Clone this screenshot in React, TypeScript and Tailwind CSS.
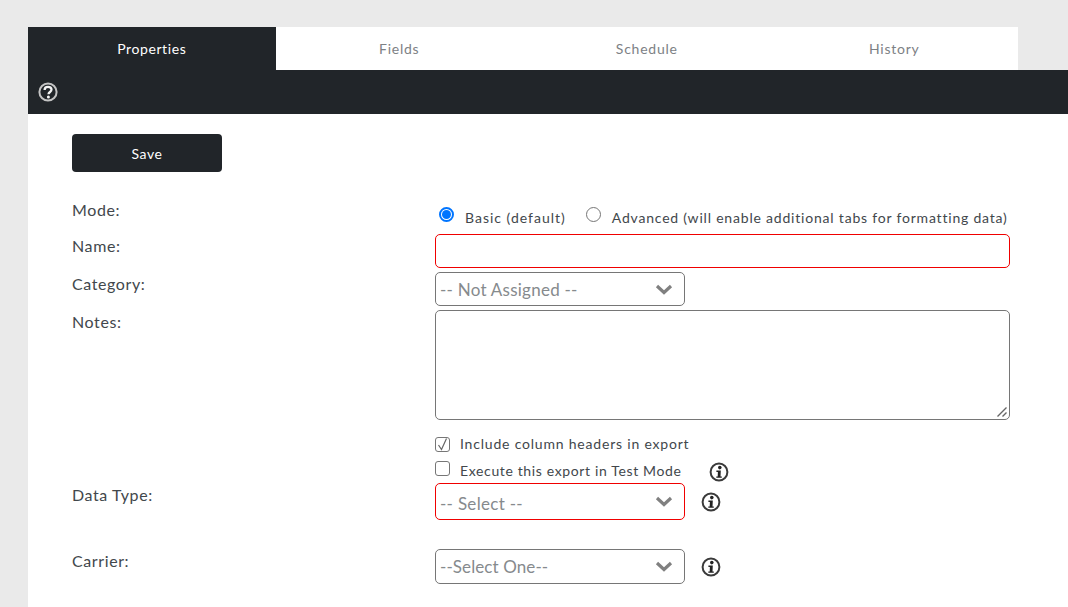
const labelText = "text-[16px] leading-[20px] text-[#42474c] tracking-[0.6px]"
const optionText = "text-[14px] leading-[18px] text-[#42474c]"

const tabs = ["Properties", "Fields", "Schedule", "History"]

const InfoIcon = () => (
  <svg width="20" height="20" viewBox="0 0 20 20" className="block">
    <circle cx="10" cy="10" r="8.4" fill="#fff" stroke="#3a3a3a" strokeWidth="2" />
    <circle cx="10.8" cy="5.6" r="1.8" fill="#222" />
    <path d="M7.4 8.6h4.4l-.3 5.8h1.3v1.4H7.3v-1.4h1.4l.2-4.4H7.4z" fill="#222" />
  </svg>
)

const HelpIcon = () => (
  <svg width="20" height="20" viewBox="0 0 20 20" className="block">
    <circle cx="10" cy="10" r="8.6" fill="none" stroke="#c4c4c4" strokeWidth="2" />
    <path d="M6.6 8C6.6 5.8 8.2 4.8 10 4.8c2 0 3.5 1.1 3.5 2.8 0 2.4-3 2.3-3 4.6" fill="none" stroke="#f4f4f4" strokeWidth="2.3" />
    <circle cx="10.4" cy="15.1" r="1.5" fill="#f4f4f4" />
  </svg>
)

const Select = ({ text, invalid, height, textClass }: { text: string; invalid?: boolean; height: string; textClass: string }) => (
  <div
    className={`flex w-[250px] items-center justify-between rounded-[5px] border bg-white pl-[4px] pr-[11px] ${height} ${
      invalid ? "border-[#f00000]" : "border-[#767676]"
    }`}
  >
    <span className={`font-['Lato',sans-serif] text-[17px] leading-[22px] text-[#868a8d] ${textClass}`}>{text}</span>
    <svg width="18" height="11" viewBox="0 0 18 11" className="block">
      <path d="M2 2l7 6.5L16 2" fill="none" stroke="#808080" strokeWidth="3.2" />
    </svg>
  </div>
)

const Row = ({ label, labelClass, className, children }: { label?: string; labelClass?: string; className?: string; children: React.ReactNode }) => (
  <div className={`grid grid-cols-[363px_575px] ${className ?? ""}`}>
    <div className={`${labelText} ${labelClass ?? ""}`}>{label}</div>
    <div>{children}</div>
  </div>
)

export default function App() {
  return (
    <div className="h-[607px] overflow-hidden bg-[#eaeaea] pl-[28px] pt-[27px] font-['Lato',sans-serif]">
      <div className="flex h-[43px] w-[990px] bg-white">
        {tabs.map((tab, i) => (
          <div
            key={tab}
            className={`flex flex-1 items-center justify-center text-[14px] ${
              i === 0 ? "bg-[#212529] tracking-[0.6px] text-white" : "tracking-[0.75px] text-[#7d8185]"
            }`}
          >
            {tab}
          </div>
        ))}
      </div>
      <div className="flex h-[44px] items-center bg-[#212529] pl-[10px]">
        <HelpIcon />
      </div>
      <div className="h-[493px] bg-white pl-[44px] pt-[20px]">
        <button className="block h-[38px] w-[150px] rounded-[4px] bg-[#212529] text-[14px] tracking-[0.6px] text-white">
          Save
        </button>

        <Row label="Mode:" className="mt-[28px] h-[34px]">
          <div className="flex items-start pl-[4px] pt-[9px]">
            <span className="mr-[11px] mt-[-2px] flex h-[15px] w-[15px] items-center justify-center rounded-full border-[2px] border-[#0075ff]">
              <span className="h-[9px] w-[9px] rounded-full bg-[#0075ff]" />
            </span>
            <span className={`${optionText} mr-[20px] tracking-[1px]`}>Basic (default)</span>
            <span className="mr-[11px] mt-[-2px] h-[15px] w-[15px] rounded-full border border-[#767676]" />
            <span className={`${optionText} tracking-[0.8px]`}>Advanced (will enable additional tabs for formatting data)</span>
          </div>
        </Row>

        <Row label="Name:" labelClass="pt-[2px]" className="h-[34px]">
          <div className="h-[34px] rounded-[5px] border border-[#f00000]" />
        </Row>

        <Row label="Category:" labelClass="pt-[2px]" className="mt-[4px] h-[34px]">
          <Select text="-- Not Assigned --" height="h-[34px]" textClass="pt-[2px] tracking-[0.25px]" />
        </Row>

        <Row label="Notes:" labelClass="pt-[2px]" className="mt-[4px] h-[110px]">
          <div className="relative h-[110px] rounded-[5px] border border-[#767676]">
            <svg width="12" height="12" viewBox="0 0 12 12" className="absolute bottom-[1px] right-[1px]">
              <path d="M1.5 10.5L10.5 1.5M6.5 10.5L10.5 6.5" stroke="#666" strokeWidth="1.4" />
            </svg>
          </div>
        </Row>

        <Row className="mt-[15px] h-[19px]">
          <div className="flex items-center">
            <span className="relative mr-[10px] h-[15px] w-[15px] rounded-[3px] border border-[#767676]">
              <svg width="15" height="15" viewBox="0 0 15 15" className="absolute left-[-1px] top-[-1px]">
                <path d="M3.5 8l3 4.5L11.5 1.5" fill="none" stroke="#666" strokeWidth="1.2" />
              </svg>
            </span>
            <span className={`${optionText} tracking-[0.8px]`}>Include column headers in export</span>
          </div>
        </Row>

        <Row className="mt-[8px] h-[20px]">
          <div className="flex h-[20px] items-center">
            <span className="mr-[10px] mt-[-7px] h-[15px] w-[15px] rounded-[3px] border border-[#767676]" />
            <span className={`${optionText} mt-[-3px] w-[250px] tracking-[0.64px]`}>Execute this export in Test Mode</span>
            <span className="ml-[-1px]">
              <InfoIcon />
            </span>
          </div>
        </Row>

        <Row label="Data Type:" labelClass="pt-[2px]" className="mt-[1px] h-[37px]">
          <div className="flex items-center gap-[16px]">
            <Select text="-- Select --" invalid height="h-[37px]" textClass="pt-[4px] tracking-[0.3px]" />
            <InfoIcon />
          </div>
        </Row>

        <Row label="Carrier:" labelClass="pt-[2px]" className="mt-[29px] h-[35px]">
          <div className="flex items-center gap-[16px]">
            <Select text="--Select One--" height="h-[35px]" textClass="tracking-[0.1px]" />
            <InfoIcon />
          </div>
        </Row>
      </div>
    </div>
  )
}
